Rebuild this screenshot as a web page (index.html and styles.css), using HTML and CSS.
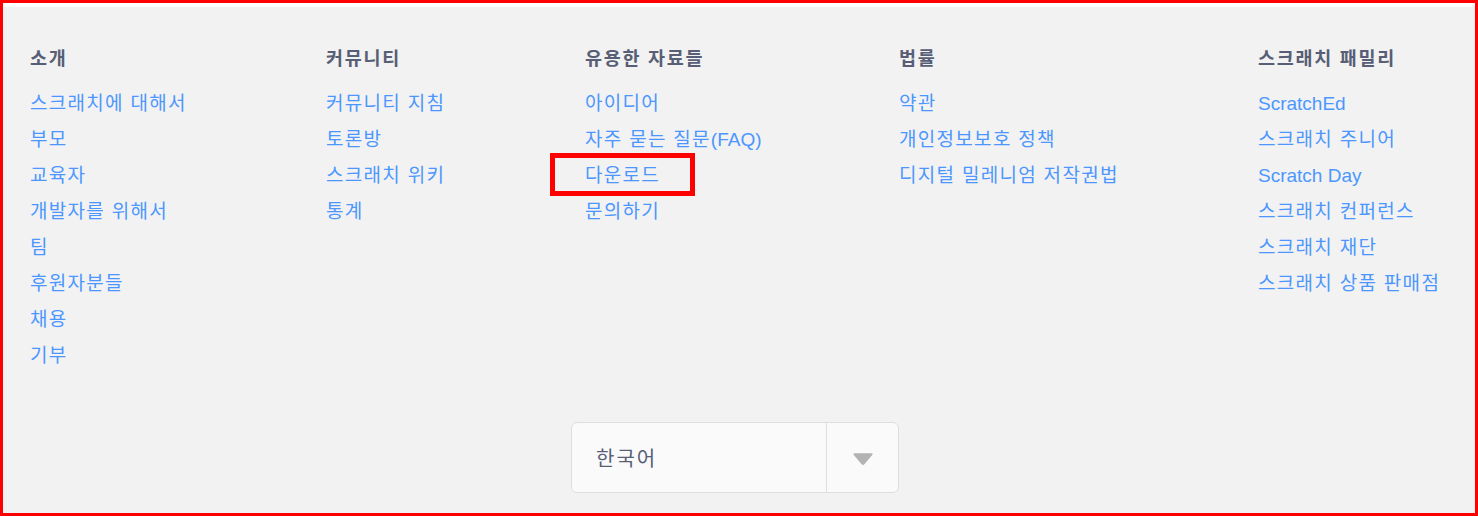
FILE: index.html
```html
<!DOCTYPE html>
<html lang="ko">
<head>
<meta charset="utf-8">
<link rel="stylesheet" href="styles.css">
</head>
<body>
<div class="frame">
  <div class="topstrip"></div>
  <footer class="footer">
    <div class="inner">
      <div class="cols">
        <dl class="col">
          <dt>소개</dt>
          <dd><a href="#">스크래치에 대해서</a></dd>
          <dd><a href="#">부모</a></dd>
          <dd><a href="#">교육자</a></dd>
          <dd><a href="#">개발자를 위해서</a></dd>
          <dd><a href="#">팀</a></dd>
          <dd><a href="#">후원자분들</a></dd>
          <dd><a href="#">채용</a></dd>
          <dd><a href="#">기부</a></dd>
        </dl>
        <dl class="col">
          <dt>커뮤니티</dt>
          <dd><a href="#">커뮤니티 지침</a></dd>
          <dd><a href="#">토론방</a></dd>
          <dd><a href="#">스크래치 위키</a></dd>
          <dd><a href="#">통계</a></dd>
        </dl>
        <dl class="col">
          <dt>유용한 자료들</dt>
          <dd><a href="#">아이디어</a></dd>
          <dd><a href="#">자주 묻는 질문<span class="latin">(FAQ)</span></a></dd>
          <dd class="marked"><a href="#">다운로드</a><span class="mark"></span></dd>
          <dd><a href="#">문의하기</a></dd>
        </dl>
        <dl class="col">
          <dt>법률</dt>
          <dd><a href="#">약관</a></dd>
          <dd><a href="#">개인정보보호 정책</a></dd>
          <dd><a href="#">디지털 밀레니엄 저작권법</a></dd>
        </dl>
        <dl class="col">
          <dt>스크래치 패밀리</dt>
          <dd><a href="#" class="latin">ScratchEd</a></dd>
          <dd><a href="#">스크래치 주니어</a></dd>
          <dd><a href="#" class="latin">Scratch Day</a></dd>
          <dd><a href="#">스크래치 컨퍼런스</a></dd>
          <dd><a href="#">스크래치 재단</a></dd>
          <dd><a href="#">스크래치 상품 판매점</a></dd>
        </dl>
      </div>
      <div class="lang-row">
        <div class="select">
          <span class="select-value">한국어</span>
          <span class="select-arrow">
            <svg width="22" height="14" viewBox="0 0 22 14"><path d="M2.5 1.2 H19.5 Q21.5 1.2 20.2 3 L12.4 12.2 Q11 13.6 9.6 12.2 L1.8 3 Q0.5 1.2 2.5 1.2 Z" fill="#b3b3b3"/></svg>
          </span>
        </div>
      </div>
    </div>
  </footer>
</div>
</body>
</html>
```

FILE: styles.css
```css
* { box-sizing: border-box; }
html, body { margin: 0; padding: 0; }
body {
  font-family: "Liberation Sans", "Noto Sans CJK KR", sans-serif;
  background: #ffffff;
}
.frame {
  width: 1478px;
  height: 516px;
  border: 3px solid #ff0000;
  display: flex;
  flex-direction: column;
  overflow: hidden;
}
.topstrip {
  height: 4px;
  background: #ffffff;
  flex: none;
}
.footer {
  flex: 1;
  background: #f2f2f2;
  padding: 40px 0 0 27px;
}
.inner {
  width: 1410px;
}
.cols {
  display: grid;
  grid-template-columns: 296px 259px 314px 359px auto;
}
.col {
  margin: 0;
}
.col dt {
  font-size: 18.5px;
  font-weight: bold;
  color: #575e75;
  line-height: 24px;
  letter-spacing: 1.7px;
  margin-bottom: 15px;
}
.col dd {
  margin: 0;
  font-size: 19px;
  line-height: 36px;
  letter-spacing: 1.3px;
  white-space: nowrap;
}
.col dd a {
  color: #4c97ff;
  text-decoration: none;
}
.latin {
  letter-spacing: 0;
}
.marked {
  position: relative;
}
.mark {
  position: absolute;
  left: -35px;
  top: -5px;
  width: 145px;
  height: 43px;
  border: 5px solid #ff0000;
}
.lang-row {
  display: flex;
  justify-content: center;
  margin-top: 48px;
}
.select {
  width: 328px;
  height: 71px;
  background: #fafafa;
  border: 1px solid #dedede;
  border-radius: 6px;
  display: flex;
  align-items: stretch;
}
.select-value {
  flex: 1;
  display: flex;
  align-items: center;
  padding-left: 24px;
  font-size: 20px;
  letter-spacing: 2px;
  color: #575e75;
}
.select-arrow {
  width: 72px;
  border-left: 1px solid #dedede;
  display: flex;
  align-items: center;
  justify-content: center;
  padding-top: 2px;
}
.select-arrow svg { display: block; }
```
